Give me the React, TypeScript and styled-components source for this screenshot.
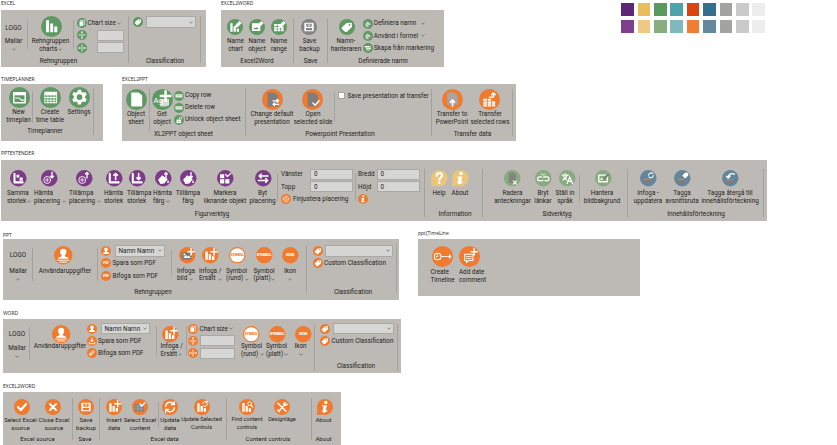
import React from "react";
import styled, { createGlobalStyle } from "styled-components";

const GlobalStyle = createGlobalStyle`
  html, body { margin: 0; background: #fff; overflow: hidden; }
  * { box-sizing: border-box; }
`;

const tone = {
  green: "#5e9862",
  orange: "#f07a2d",
  purple: "#7d3a86",
  yellow: "#ecc57b",
  sage: "#87ab7f",
  blue: "#62869c",
  gray: "#848484",
};
type Tone = keyof typeof tone;

/* ---------- layout parts ---------- */

const Page = styled.main`
  width: 837px;
  height: 445px;
  overflow: hidden;
  font: 6.35px/7.7px Roboto, "Liberation Sans", sans-serif;
  color: #1d1d1b;
`;

const Shelf = styled.div<{ $h: number; $left: number }>`
  display: flex;
  align-items: flex-start;
  height: ${(p) => p.$h}px;
  padding-left: ${(p) => p.$left}px;
`;

const Frame = styled.section<{ $w: number; $ml?: number }>`
  flex: none;
  width: ${(p) => p.$w}px;
  margin-left: ${(p) => p.$ml ?? 0}px;
`;

const Title = styled.h2<{ $drop?: number }>`
  margin: 0;
  height: 10px;
  padding-top: ${(p) => p.$drop ?? 0}px;
  font: 400 5px/7px "Open Sans", "Noto Sans", sans-serif;
  white-space: nowrap;
`;

const Ribbon = styled.div<{ $h: number; $top: number; $size: number; $label: number; $foot: number; $font?: number }>`
  display: flex;
  align-items: flex-start;
  height: ${(p) => p.$h}px;
  background: #bdbab5;
  font-size: ${(p) => p.$font ?? 6.35}px;
  --icon-top: ${(p) => p.$top}px;
  --icon-size: ${(p) => p.$size}px;
  --label-top: ${(p) => p.$label - 3.1}px;
  --foot-top: ${(p) => p.$foot - 3.1}px;
`;

const GroupBox = styled.div<{ $w: number }>`
  flex: none;
  width: ${(p) => p.$w}px;
  display: grid;
  grid-template-rows: var(--foot-top) auto;
`;

const Tools = styled.div`
  display: flex;
  align-items: flex-start;
  min-height: 0;
`;

const Footer = styled.div<{ $center: number }>`
  display: flex;
  justify-content: center;
  width: ${(p) => p.$center * 2}px;
  white-space: nowrap;
`;

const Rule = styled.i<{ $top: number; $h: number; $ml?: number }>`
  flex: none;
  width: 1px;
  height: ${(p) => p.$h}px;
  margin-top: ${(p) => p.$top}px;
  margin-left: ${(p) => p.$ml ?? 0}px;
  background: #a5a29e;
`;

const ToolBox = styled.div<{ $ml: number }>`
  flex: none;
  width: 20px;
  margin-left: ${(p) => p.$ml}px;
  display: grid;
  grid-template-rows: var(--label-top) auto;
`;

const IconSlot = styled.div<{ $grow: number }>`
  display: flex;
  justify-content: center;
  padding-top: calc(var(--icon-top) - ${(p) => p.$grow / 2}px);
  svg {
    flex: none;
    width: calc(var(--icon-size) + ${(p) => p.$grow}px);
    height: calc(var(--icon-size) + ${(p) => p.$grow}px);
  }
`;

const Caption = styled.div<{ $shift: number; $left: boolean; $small?: boolean }>`
  display: flex;
  flex-direction: column;
  align-items: ${(p) => (p.$left ? "flex-start" : "center")};
  width: 20px;
  margin-left: ${(p) => p.$shift}px;
  ${(p) => p.$small && "font-size: 5.6px;"}
`;

const Line = styled.span`
  display: flex;
  align-items: center;
  gap: 0.5px;
  min-height: 7.7px;
  white-space: pre;
`;

const Stack = styled.div<{ $ml: number; $w?: number; $top: number; $row?: number }>`
  flex: none;
  width: ${(p) => (p.$w ? `${p.$w}px` : "auto")};
  margin-left: ${(p) => p.$ml}px;
  padding-top: ${(p) => p.$top}px;
  display: grid;
  grid-auto-rows: ${(p) => p.$row ?? 12.3}px;
`;

const MiniRow = styled.div<{ $gap?: number }>`
  display: flex;
  align-items: center;
  gap: ${(p) => p.$gap ?? 1.5}px;
  white-space: nowrap;
  > svg:first-child { width: 10px; height: 10px; flex: none; }
`;

const Text = styled.span<{ $end?: number }>`
  padding-top: 1.4px;
  padding-right: ${(p) => p.$end ?? 0}px;
`;

const Box = styled.div<{ $w: number; $h?: number; $ml?: number }>`
  flex: none;
  display: flex;
  align-items: center;
  justify-content: space-between;
  width: ${(p) => p.$w}px;
  height: ${(p) => p.$h ?? 11}px;
  margin-left: ${(p) => p.$ml ?? 0}px;
  padding: 0 2px 0 3px;
  background: #d6d6d4;
  border: 1px solid #aaa8a5;
`;

const FieldName = styled(Text)<{ $w: number }>`
  flex: none;
  width: ${(p) => p.$w}px;
`;

const CheckBox = styled.i`
  width: 7px;
  height: 7px;
  background: #fff;
  border: 1px solid #a5a29e;
`;

const LogoBox = styled.div<{ $ml: number; $top: number; $gap: number }>`
  flex: none;
  width: 20px;
  margin-left: ${(p) => p.$ml}px;
  padding-top: ${(p) => p.$top + 0.8}px;
  display: flex;
  flex-direction: column;
  align-items: center;
  gap: ${(p) => p.$gap}px;
`;

const LogoMenu = styled.div`
  display: flex;
  flex-direction: column;
  align-items: center;
  gap: 2.3px;
`;

const Palette = styled.div`
  display: grid;
  grid-template-columns: repeat(9, 12.6px);
  grid-auto-rows: 13px;
  gap: 4px 3.8px;
  margin: 3px 0 0 177.6px;
`;

const Swatch = styled.i<{ $c: string }>`
  background: ${(p) => p.$c};
`;

/* ---------- glyphs, on a 24 unit disc ---------- */

const s = (d: string, w = 1.8, c = "#fff") => (
  <path d={d} stroke={c} strokeWidth={w} fill="none" strokeLinecap="round" strokeLinejoin="round" />
);
const f = (d: string, c = "#fff") => <path d={d} fill={c} fillRule="evenodd" />;
const word = (t: string, size: number, fill = "#fff", y = 13.7) => (
  <text x="12" y={y} fontSize={size} fontWeight="900" textAnchor="middle" fill={fill} fontFamily="Roboto, sans-serif">{t}</text>
);
const G = "#7d7d7d";
const plus = s("M17.5 2.5v9M13 7h9", 2.2);
const pencil = f("M12.5 9.5l6-6.5 3.5 3-6 6.5-4 .8z");
const bag = f("M4.5 14l6-6.5 8 6-5 6-5.5 1z");

const glyphs: Record<string, React.ReactNode> = {
  chart: f("M5.8 4.8h3.4v13.7H5.8zM10.5 8.5h3.4v10h-3.4zM15.2 12h3.4v6.5h-3.4z"),
  chartEdit: <>{f("M5 6.5h3.4v12.5H5zM9.8 11h3.4v8H9.8zM14.6 14.5h3.4v4.5h-3.4z")}{pencil}</>,
  chartPlus: <>{f("M5 6.5h3.4v12.5H5zM9.8 10.5h3.4v8.5H9.8zM14.6 13.5h3.4v5.5h-3.4z")}{plus}</>,
  chartSync: <>{f("M5 6h3.4v13H5zM9.8 10.5h3.4v8.5H9.8zM14.6 13.5h3.4v5.5h-3.4z")}{s("M13.3 7a3.6 3.6 0 0 1 6-2.4M20 7.5a3.6 3.6 0 0 1-6 2.6M19.8 3v2.5h-2.5", 1.4)}</>,
  chartFind: <>{f("M5 6h3.4v13H5zM9.8 10.5h3.4v8.5H9.8zM14.6 14h3.4v5h-3.4z")}<circle cx="16" cy="7" r="2.8" stroke="#fff" strokeWidth="1.4" fill="none" />{s("M18 9.3l2.8 3", 1.6)}</>,
  object: <>{f("M4.5 6.5h12.5v11.5H4.5zM6.5 15.5h8l-2.5-4-2 2.2-1.3-1.2z")}{pencil}</>,
  range: <>{f("M4.5 7.5h4.3v3H4.5zM9.8 7.5h4v3h-4zM4.5 11.5h4.3v3H4.5zM9.8 11.5h4v3h-4zM14.8 11.5h4.2v3h-4.2zM4.5 15.5h4.3v3H4.5zM9.8 15.5h4v3h-4zM14.8 15.5h4.2v3h-4.2z")}{pencil}</>,
  copyShape: <>{f("M6 8h9v11H6z")}{s("M8 5.5h10.5V17", 1.6)}</>,
  arrowsV: <>{s("M4.5 12h15", 1.9)}{s("M12 4v5M12 15v5M10.5 6L12 4l1.5 2M10.5 18l1.5 2 1.5-2", 1.6)}</>,
  arrowsH: <>{s("M12 4.5v15", 1.9)}{s("M4 12h5M15 12h5M6 10.5L4 12l2 1.5M18 10.5l2 1.5-2 1.5", 1.6)}</>,
  tag: f("M4.5 12.5l7-6.5 7.5-.5.5 6.5-7.5 7c-1 .8-2 .8-3 0l-4.3-3.8c-.9-1-.9-1.9-.2-2.7zM15.7 7.5a1.3 1.3 0 1 0 .1 2.6 1.3 1.3 0 0 0-.1-2.6z"),
  save: f("M6 5.5h12c.6 0 1 .4 1 1v11c0 .6-.4 1-1 1H6c-.6 0-1-.4-1-1v-11c0-.6.4-1 1-1zM8 7v4.5h8V7zM7.5 13.5V17h9v-3.5zM11 8h2v2.5h-2z"),
  tagEdit: <>{f("M5 12l6-6 8 6-6 7-5 .5z", "#c9d6c4")}{s("M12 15l6 3.5", 2.4, G)}</>,
  tagGrid: <>{f("M4 7h14v4H4zM7 12.5h11v2.5h-11z")}{s("M9 16l3 3 7-7", 1.8)}</>,
  window: <>{s("M5.5 6.5h13v11.5h-13z", 1.6)}{f("M5 6h14v3.5H5z")}{s("M7.5 12.5h4l2.5 2.5h3.5", 1.2)}</>,
  table: f("M5 5.5h14.5v13H5zM6 9.5v2h2.5v-2zM9.5 9.5v2H12v-2zM13 9.5v2h2.5v-2zM16.5 9.5v2h2v-2zM6 12.5v2h2.5v-2zM9.5 12.5v2H12v-2zM13 12.5v2h2.5v-2zM16.5 12.5v2h2v-2zM6 15.5v2h2.5v-2zM9.5 15.5v2H12v-2zM13 15.5v2h2.5v-2zM16.5 15.5v2h2v-2z"),
  gear: f("M10.2 3h3.6l.5 2.5 1.8 1 2.4-.9 1.8 3.1-1.9 1.6v2.4l1.9 1.6-1.8 3.1-2.4-.9-1.8 1-.5 2.5h-3.6l-.5-2.5-1.8-1-2.4.9-1.8-3.1 1.9-1.6v-2.4L3.7 8.7l1.8-3.1 2.4.9 1.8-1zM12 8.2a3.3 3.3 0 1 0 0 6.6 3.3 3.3 0 0 0 0-6.6z"),
  page: f("M6 4h8.5l4 3.5v12.5H6z"),
  getObject: <>{f("M9.5 11.5h10v7l-4 1.5h-6z", "#d8dcd5")}<text x="1.8" y="15.5" fontSize="9" fill="#fff" fontFamily="Roboto, sans-serif">Ag</text>{s("M15.5 2.5v11M10 8h11", 2.8)}</>,
  rowCopy: <>{f("M3.5 8h17v7.5h-17z")}{s("M6 11.8h3M11 11.8h2.5M15.5 11.8h2.5", 1.5, tone.green)}</>,
  lock: <>{f("M6 11h11v8.5H6z")}{s("M13 10V7a2.8 2.8 0 0 1 5.5 0v3", 1.8)}{s("M9.5 15.3h4", 1.4, tone.green)}</>,
  pageSwap: <>{f("M6.5 4h8l3.5 3.5V20H6.5z", G)}{s("M12.5 13.5h6.5M17 11.8l2 1.7-2 1.7M19 17.5h-6M14.5 16l-2 1.5 2 1.5", 1.4)}</>,
  pageCheck: <>{f("M6.5 4h8l3.5 3.5V20H6.5z", G)}{s("M12.5 16l2.5 2.5 4.5-5", 1.7)}</>,
  pageUp: <>{f("M6 4h8l4 3.5V18H6z", "#aba5a1")}{s("M12 20v-7M9.8 15l2.2-2.5 2.2 2.5", 1.8)}</>,
  tableUp: <>{f("M5 11h4v2.5H5zM10 11h4v2.5h-4zM5 14.3h4v2.5H5zM10 14.3h4v2.5h-4zM15 14.3h3.5v2.5H15zM5 17.5h4V20H5zM10 17.5h4V20h-4zM15 17.5h3.5V20H15z")}{s("M12 9.5h4.5V4.5M14.5 6.5l2-2.2 2 2.2", 1.7)}</>,
  size: <>{s("M6.5 5.5v12.5h12", 3)}{f("M9.5 7h4v4h-4zM14 11h4.5v4.5H14z")}</>,
  placeDown: <><circle cx="9" cy="14.5" r="5" stroke="#fff" fill="none" strokeWidth="1.3" />{s("M6.5 14.5h5M9 12v5", 1.1)}{s("M16 3v8M13.8 9L16 11.3 18.2 9", 1.9)}</>,
  placeUp: <><circle cx="9" cy="14.5" r="5" stroke="#fff" fill="none" strokeWidth="1.3" />{s("M6.5 14.5h5M9 12v5", 1.1)}{s("M16 11.5V3.5M13.8 5.7L16 3.5l2.2 2.2", 1.9)}</>,
  sizeUp: <>{s("M5.5 5.5v12.5h13", 3)}{s("M14 14V5M11.5 7.5L14 5l2.5 2.5", 2.3)}</>,
  sizeDown: <>{s("M5.5 5.5v12.5h13", 3)}{s("M14 5v9M11.5 11.5L14 14l2.5-2.5", 2.3)}</>,
  fillUp: <>{bag}{s("M16 12V4M14 6l2-2.2L18 6", 1.9)}{f("M19 14.5c1.8 2.5 1.8 4.5 0 4.5s-1.8-2 0-4.5z")}</>,
  fillDown: <>{bag}{s("M16 3.5v8M14 9.5l2 2.2 2-2.2", 1.9)}{f("M19 14.5c1.8 2.5 1.8 4.5 0 4.5s-1.8-2 0-4.5z")}</>,
  mark: <>{f("M4.5 6h6v6h-6zM4.5 13.5h6v6h-6zM12 13.5h6v6h-6z")}{s("M12.5 6.5l2.5 3 5.5-5", 1.8)}</>,
  swap: s("M19 8.8H6M9 6L6 8.8 9 11.5M5 15.3h13M15.5 12.5l3 2.8-3 2.7", 2.1),
  target: <><circle cx="12" cy="12" r="6.5" stroke="#fff" strokeWidth="1.3" fill="none" /><circle cx="12" cy="12" r="3" stroke="#fff" strokeWidth="1.2" fill="none" />{s("M12 3.5v3M12 17.5v3M3.5 12h3M17.5 12h3", 1)}</>,
  info: <><circle cx="13.2" cy="5.2" r="2.5" fill="#fff" />{f("M8 9.3h7l-2 8.2c.8 0 1.5-.4 2.3-1.1l.7 1c-1.6 2-3.4 3.100-5.400 3.100-2 0-2.800-1-2.400-2.700l1.500-6.500H7.700z")}</>,
  help: <>{s("M8.2 8.5c.2-5.3 8.3-5 7.8-.5-.3 2.800-3.800 3-3.900 6.500", 3)}<circle cx="11.8" cy="18.7" r="1.9" fill="#fff" /></>,
  pageX: <>{f("M7 3.5h7l3.5 3.5v12H7z", "#85857f")}{s("M13.5 16l4.5 4.5M18 16l-4.5 4.5", 1.7)}</>,
  unlink: <>{s("M9.5 10H6.5a2.8 2.8 0 0 0 0 5.6h3.5a2.8 2.8 0 0 0 1.5-.6M14.5 15.6h3a2.8 2.8 0 0 0 0-5.6H14a2.8 2.8 0 0 0-1.5.6", 1.8)}{s("M12 5.5v2M9 5.5l.8 1.8M15 5.5l-.8 1.8", 1)}</>,
  language: <>{s("M4.5 7.5h9M9 5.3v2M11.5 7.5c-.5 3-3 5.5-6 7M6.8 9.5c1 2.5 3 4 4.7 5", 1.6)}{s("M11.8 19.5l3.9-9.5 3.9 9.5M13.2 16.5h5", 1.8)}</>,
  image: <>{s("M5.5 7.5h12.5v9.5h-12.5z", 2)}{s("M12 13.5l7-6.5", 3, G)}{f("M7 14l3-3 2.5 3z")}</>,
  boxSync: <>{f("M4 12h12v7.5H4z", G)}{s("M6 13.5h8", 1.2, "#a0a0a0")}{s("M12.5 7.5a3.7 3.7 0 0 1 6.5-2M19.5 8a3.7 3.7 0 0 1-6.5 2", 1.5)}</>,
  boxTag: <>{f("M4 12h12v7.5H4z", G)}{s("M6 13.5h8", 1.2, "#a0a0a0")}{f("M12 8l4.500-4.500 4 .8.3 3.700-4.800 4.500z")}</>,
  boxBack: <>{f("M5 13h12v7H5z", G)}{s("M7 14.5h8", 1.2, "#a0a0a0")}{s("M18 6c-5-2-8.5.5-9 5M6.5 9L9 11.5 11.5 9", 2)}</>,
  user: <>{f("M12 3.5c3 0 4.3 2 4 4.6-.3 2.5-1.3 3.4-2 4.2 0 1.5 1 1.5 3.5 2.3.8.3 1 1 1 2H5.5c0-1 .2-1.7 1-2 2.5-.8 3.5-.8 3.5-2.3-.7-.8-1.7-1.7-2-4.2-.3-2.6 1-4.6 4-4.6z")}{s("M4.5 18.5h15M7.5 21h9", 1.2)}</>,
  person: f("M12 3.5c3 0 4.3 2 4 4.8-.3 2.5-1.2 3.6-2 4.4 0 1.8 1 2 4 3 1 .4 1.5 1.5 1.5 3.3h-15c0-1.8.5-2.9 1.5-3.3 3-1 4-1.2 4-3-.8-.8-1.7-1.9-2-4.4-.3-2.8 1-4.8 4-4.8z"),
  pdf: word("PDF", 7.5, "#fff", 14.6),
  download: <>{s("M12 4.5V13M8.5 10l3.5 3.5 3.5-3.5", 2.2)}{s("M5.5 15v3.5h13V15", 2.2)}</>,
  clip: s("M6 14l7-6.5c2.5-2 5.5.5 3.7 3L11 16.5c-1.5 1-3-.5-2-1.8l5-4.5M6 14c-1.5 2.5 1 5 3.5 3.5", 1.8),
  photoPlus: <>{f("M4 8h14v10H4z", "#777")}{f("M6 16l4-4.5 2.5 2.5 2-1.5 2.5 3.5zM6.5 9.5H9V12H6.5z")}{plus}</>,
  symbolRing: <><circle cx="12" cy="12" r="10.3" fill="#fff" />{word("SYMBOL", 5, tone.orange)}</>,
  symbol: word("SYMBOL", 5.4),
  ikon: word("IKON", 5.2),
  timeline: <><circle cx="6.5" cy="12" r="3.8" stroke="#fff" strokeWidth="1.2" fill="none" />{s("M6.5 10v2h-1.5", 1)}{s("M11.5 12h2M15 12h1.5M18 12h3.5M19.8 10.2l1.7 1.8-1.7 1.8", 1.3)}</>,
  comment: <>{s("M6.5 9.5h9.5v7H11l-2.5 2.5v-2.5h-2z", 1.2)}{s("M8.5 12h5.5M8.5 14.2h5.5", 0.9)}{s("M17.3 3.2v7M13.8 6.7h7", 1.7)}</>,
  check: s("M6 12l4.2 4.5 8-9", 3.2),
  cross: s("M7.3 7.3l9.4 9.4M16.7 7.3l-9.4 9.4", 3),
  gridCheck: <>{f("M4 7h14v12H4z", G)}{s("M4 11h14M4 15h14M8.5 7v12M13.5 7v12", 0.9, "#b9b4af")}{s("M12 7.5l2.5 3 5-5", 2)}</>,
  sync: s("M5.5 11a6.5 6.5 0 0 1 12-3M18.5 13a6.5 6.5 0 0 1-12 3M18.5 4v4.5H14M5.5 20v-4.5H10", 2.1),
  tools: <>{s("M7.5 18l9-10M17 5.5c-3 .5-3.5 3-1.5 4 2 .5 3.5-.5 4-2", 2)}{s("M6 6.5l12 12", 2.2)}{s("M5.5 16.5l2.5 2.5", 2)}</>,
};

const Icon = ({ name, color, tail }: { name: string; color: Tone; tail?: boolean }) => (
  <svg viewBox="0 0 24 24" overflow="visible" aria-hidden>
    {tail && <path d="M1 13L0 24l10-1z" fill={tone[color]} />}
    <circle cx="12" cy="12" r="12" fill={tone[color]} />
    {glyphs[name]}
  </svg>
);

const Chevron = () => (
  <svg width="4" height="3" viewBox="0 0 4 3" aria-hidden>
    <path d="M.5.8L2 2.2 3.500.8" fill="none" stroke="#4a4846" strokeWidth=".6" />
  </svg>
);

/* ---------- composed parts ---------- */

type ToolProps = {
  icon: string; color: Tone; ml: number; text: string[];
  shift?: number; left?: boolean; small?: boolean; tail?: boolean; grow?: number;
};

/* A trailing "▾" in a text line is drawn as the drop-down chevron. */
const Tool = ({ icon, color, ml, text, shift = 0, left = false, small, tail, grow = 0 }: ToolProps) => (
  <ToolBox $ml={ml}>
    <IconSlot $grow={grow}><Icon name={icon} color={color} tail={tail} /></IconSlot>
    <Caption $shift={shift} $left={left} $small={small}>
      {text.map((t) => (
        <Line key={t}>{t.replace("▾", "")}{t.endsWith("▾") && <Chevron />}</Line>
      ))}
    </Caption>
  </ToolBox>
);

const Group = ({ w, foot, center = 0, children }: { w: number; foot?: string; center?: number; children: React.ReactNode }) => (
  <GroupBox $w={w}>
    <Tools>{children}</Tools>
    {foot && <Footer $center={center}>{foot}</Footer>}
  </GroupBox>
);

type MiniProps = { icon: string; color: Tone; text?: string; more?: boolean; end?: number; gap?: number };

const Mini = ({ icon, color, text, more, end, gap }: MiniProps) => (
  <MiniRow $gap={gap}>
    <Icon name={icon} color={color} />
    {text && <Text $end={end}>{text}</Text>}
    {more && <Chevron />}
  </MiniRow>
);

const Field = ({ name, w }: { name: string; w: number }) => (
  <MiniRow $gap={0}>
    <FieldName $w={w}>{name}</FieldName>
    <Box $w={43}><Text>0</Text></Box>
  </MiniRow>
);

const Logo = ({ ml, top, gap }: { ml: number; top: number; gap: number }) => (
  <LogoBox $ml={ml} $top={top} $gap={gap}>
    <span>LOGO</span>
    <LogoMenu><span>Mallar</span><Chevron /></LogoMenu>
  </LogoBox>
);

const swatches = [
  "#5f2678", "#e9bd5b", "#5a9a5e", "#4ea3aa", "#d9440f", "#33708e", "#a3a3a2", "#cacaca", "#ededed",
  "#7e3f8c", "#edc984", "#88ad80", "#80b8be", "#f07d33", "#64889e", "#a3a3a2", "#cacaca", "#ededed",
];

export default function App() {
  return (
    <Page>
      <GlobalStyle />

      <Shelf $h={74} $left={1}>
        <Frame $w={205.4}>
          <Title>EXCEL</Title>
          <Ribbon $h={57} $top={6} $size={21} $label={31} $foot={51.5}>
            <Group w={127} foot="Rehngruppen" center={57.5}>
              <Logo ml={2.5} top={14.6} gap={4.8} />
              <Rule $top={10} $h={29} $ml={3.5} />
              <Tool icon="chart" color="green" ml={12.5} text={["Rehngruppen", "charts▾"]} />
              <Rule $top={10} $h={29} $ml={12.5} />
              <Stack $ml={2.5} $top={7}>
                <Mini icon="copyShape" color="green" text="Chart size" more gap={1} />
                <MiniRow><Icon name="arrowsV" color="green" /><Box $w={27} $ml={9} /></MiniRow>
                <MiniRow><Icon name="arrowsH" color="green" /><Box $w={27} $ml={9} /></MiniRow>
              </Stack>
            </Group>
            <Rule $top={6} $h={47} />
            <Group w={71} foot="Classification" center={36}>
              <Stack $ml={4} $top={6}>
                <MiniRow $gap={2.5}><Icon name="tag" color="green" /><Box $w={50.5} $h={12}><span /><Chevron /></Box></MiniRow>
              </Stack>
            </Group>
            <Rule $top={6} $h={47} />
          </Ribbon>
        </Frame>

        <Frame $w={222.6} $ml={14.6}>
          <Title>EXCEL2WORD</Title>
          <Ribbon $h={57} $top={9} $size={16} $label={31} $foot={51.5}>
            <Group w={72} foot="Excel2Word" center={36}>
              <Tool icon="chartEdit" color="green" ml={4.5} text={["Name", "chart"]} />
              <Tool icon="object" color="green" ml={1.5} text={["Name", "object"]} />
              <Tool icon="range" color="green" ml={2} text={["Name", "range"]} />
            </Group>
            <Rule $top={8} $h={45} />
            <Group w={33} foot="Save" center={16.5}>
              <Tool icon="save" color="gray" ml={5.5} text={["Save", "backup"]} />
            </Group>
            <Rule $top={8} $h={45} />
            <Group w={115} foot="Definierade namn" center={55}>
              <Tool icon="tag" color="green" ml={9} text={["Namn-", "hanteraren"]} shift={-1} />
              <Stack $ml={6} $top={7.4}>
                <Mini icon="tagEdit" color="green" text="Definiera namn" more end={3.6} gap={0.8} />
                <Mini icon="tagEdit" color="green" text="Använd i formel" more end={2.4} gap={0.8} />
                <Mini icon="tagGrid" color="green" text="Skapa från markering" gap={0.8} />
              </Stack>
            </Group>
          </Ribbon>
        </Frame>

        <Palette>{swatches.map((c, i) => <Swatch key={i} $c={c} />)}</Palette>
      </Shelf>

      <Shelf $h={76} $left={1}>
        <Frame $w={102}>
          <Title $drop={1.5}>TIMEPLANNER</Title>
          <Ribbon $h={57} $top={3} $size={21} $label={28.5} $foot={47.5}>
            <Group w={92} foot="Timeplanner" center={44}>
              <Tool icon="window" color="green" ml={7.5} text={["New", "timeplan"]} />
              <Rule $top={7} $h={32} $ml={3.5} />
              <Tool icon="table" color="green" ml={7} text={["Create", "time table"]} />
              <Tool icon="gear" color="green" ml={9} text={["Settings"]} />
            </Group>
            <Rule $top={4} $h={47} />
          </Ribbon>
        </Frame>

        <Frame $w={394} $ml={19}>
          <Title $drop={1.5}>EXCEL2PPT</Title>
          <Ribbon $h={57} $top={4.5} $size={21} $label={30} $foot={50}>
            <Group w={123} foot="XL2PPT object sheet" center={61.5}>
              <Tool icon="page" color="green" ml={4} text={["Object", "sheet"]} />
              <Rule $top={5} $h={43} $ml={3} />
              <Tool icon="getObject" color="green" ml={2} text={["Get", "object"]} />
              <Stack $ml={1.5} $top={5.6} $row={12}>
                <Mini icon="rowCopy" color="green" text="Copy row" />
                <Mini icon="rowCopy" color="green" text="Delete row" />
                <Mini icon="lock" color="green" text="Unlock object sheet" />
              </Stack>
            </Group>
            <Rule $top={4} $h={48} />
            <Group w={185} foot="Powerpoint Presentation" center={94}>
              <Tool icon="pageSwap" color="orange" ml={16} text={["Change default", "presentation"]} />
              <Tool icon="pageCheck" color="orange" ml={19.5} text={["Open", "selected slide"]} shift={1.5} />
              <Rule $top={9} $h={29} $ml={12.5} />
              <Stack $ml={3} $top={5.6}>
                <MiniRow $gap={2.5}><CheckBox /><Text>Save presentation at transfer</Text></MiniRow>
              </Stack>
            </Group>
            <Rule $top={5} $h={47} />
            <Group w={80} foot="Transfer data" center={40.5}>
              <Tool icon="pageUp" color="orange" ml={10} text={["Transfer to", "PowerPoint"]} />
              <Tool icon="tableUp" color="orange" ml={17} text={["Transfer", "selected rows"]} shift={1} />
            </Group>
            <Rule $top={5} $h={47} />
          </Ribbon>
        </Frame>
      </Shelf>

      <Shelf $h={79} $left={1}>
        <Frame $w={766}>
          <Title>PPTEXTENDER</Title>
          <Ribbon $h={61} $top={10} $size={16.5} $label={33.2} $foot={54.2}>
            <Group w={423} foot="Figurverktyg" center={211}>
              <Tool icon="size" color="purple" ml={7} text={["Samma", "storlek▾"]} left shift={-1} />
              <Tool icon="placeDown" color="purple" ml={11.5} text={["Hämta", "placering ▾"]} left shift={-5.5} />
              <Tool icon="placeUp" color="purple" ml={15} text={["Tillämpa", "placering ▾"]} left shift={-5.5} />
              <Tool icon="sizeUp" color="purple" ml={9.5} text={["Hämta", "storlek"]} left />
              <Tool icon="sizeDown" color="purple" ml={3} text={["Tillämpa", "storlek"]} left />
              <Tool icon="fillUp" color="purple" ml={6} text={["Hämta", "färg ▾"]} left />
              <Tool icon="fillDown" color="purple" ml={5} text={["Tillämpa", "färg"]} />
              <Tool icon="mark" color="purple" ml={17} text={["Markera", "liknande objekt"]} />
              <Tool icon="swap" color="purple" ml={18.5} text={["Byt", "placering"]} shift={-1} />
              <Rule $top={13} $h={28} $ml={3.5} />
              <Stack $ml={3} $w={73} $top={8.4}>
                <Field name="Vänster" w={29} />
                <Field name="Topp" w={29} />
                <Mini icon="target" color="orange" text="Finjustera placering" gap={2} />
              </Stack>
              <Rule $top={13} $h={28} $ml={1} />
              <Stack $ml={2} $w={62} $top={8.4}>
                <Field name="Bredd" w={18.5} />
                <Field name="Höjd" w={18.5} />
                <Mini icon="info" color="orange" />
              </Stack>
            </Group>
            <Rule $top={9} $h={48} />
            <Group w={57} foot="Information" center={30}>
              <Tool icon="help" color="yellow" ml={4} text={["Help"]} tail />
              <Tool icon="info" color="yellow" ml={1} text={["About"]} tail />
            </Group>
            <Rule $top={9} $h={48} />
            <Group w={144} foot="Sidverktyg" center={74}>
              <Tool icon="pageX" color="sage" ml={19.5} text={["Radera", "anteckningar"]} />
              <Tool icon="unlink" color="sage" ml={10.5} text={["Bryt", "länkar"]} />
              <Tool icon="language" color="sage" ml={4} text={["Ställ in", "språk"]} shift={-2} />
              <Rule $top={15} $h={27} $ml={2} />
              <Tool icon="image" color="sage" ml={13.5} text={["Hantera", "bildbakgrund"]} shift={-1.5} />
            </Group>
            <Rule $top={9} $h={48} />
            <Group w={135} foot="Innehållsförteckning" center={68}>
              <Tool icon="boxSync" color="blue" ml={10} text={["Infoga -", "uppdatera"]} />
              <Tool icon="boxTag" color="blue" ml={14} text={["Tagga", "avsnittsruta"]} />
              <Tool icon="boxBack" color="blue" ml={28} text={["Tagga återgå till", "innehållsförteckning"]} />
            </Group>
            <Rule $top={9} $h={48} />
          </Ribbon>
        </Frame>
      </Shelf>

      <Shelf $h={80} $left={3}>
        <Frame $w={396.4}>
          <Title $drop={2.5}>PPT</Title>
          <Ribbon $h={61} $top={7.5} $size={16.5} $label={31.7} $foot={52.8}>
            <Group w={303} foot="Rehngruppen" center={150}>
              <Logo ml={5} top={12.2} gap={8} />
              <Rule $top={9} $h={33} $ml={4} />
              <Tool icon="user" color="orange" ml={18.5} text={["Användaruppgifter"]} shift={3.5} grow={2} />
              <Rule $top={9} $h={33} $ml={25.5} />
              <Stack $ml={2.5} $w={70} $top={5.4} $row={12.7}>
                <MiniRow $gap={4}><Icon name="person" color="orange" /><Box $w={50} $h={12}><Text>Namn Namn</Text><Chevron /></Box></MiniRow>
                <Mini icon="pdf" color="orange" text="Spara som PDF" gap={2} />
                <Mini icon="pdf" color="orange" text="Bifoga som PDF" gap={2} />
              </Stack>
              <Rule $top={11} $h={26} $ml={0.5} />
              <Tool icon="photoPlus" color="orange" ml={4.5} text={["Infoga", "bild ▾"]} left shift={0.5} />
              <Tool icon="chartPlus" color="orange" ml={4} text={["Infoga /", "Ersätt ▾"]} left shift={-1.5} />
              <Tool icon="symbolRing" color="orange" ml={7} text={["Symbol", "(rund) ▾"]} left shift={-1.5} />
              <Tool icon="symbol" color="orange" ml={6.5} text={["Symbol", "(platt)▾"]} left shift={-0.5} />
              <Tool icon="ikon" color="orange" ml={6} text={["Ikon", "▾"]} />
            </Group>
            <Rule $top={6} $h={48} />
            <Group w={89} foot="Classification" center={46}>
              <Stack $ml={5.5} $top={5.4} $row={12.7}>
                <MiniRow $gap={2}><Icon name="tag" color="orange" /><Box $w={68} $h={12}><span /><Chevron /></Box></MiniRow>
                <Mini icon="tag" color="orange" text="Custom Classification" />
              </Stack>
            </Group>
            <Rule $top={5} $h={49} />
          </Ribbon>
        </Frame>

        <Frame $w={222} $ml={18.6}>
          <Title $drop={0.5}>ppt[TimeLine</Title>
          <Ribbon $h={57} $top={7} $size={21} $label={33.5} $foot={50}>
            <Group w={222}>
              <Tool icon="timeline" color="orange" ml={14} text={["Create", "Timeline"]} left shift={-1.5} />
              <Tool icon="comment" color="orange" ml={7.5} text={["Add date", "comment"]} left shift={-0.5} />
            </Group>
          </Ribbon>
        </Frame>
      </Shelf>

      <Shelf $h={73} $left={3}>
        <Frame $w={398.4}>
          <Title $drop={1}>WORD</Title>
          <Ribbon $h={54} $top={7} $size={16.5} $label={27.5} $foot={47}>
            <Group w={311}>
              <Logo ml={4} top={11.2} gap={6.3} />
              <Rule $top={8} $h={33} $ml={2} />
              <Tool icon="user" color="orange" ml={21} text={["Användaruppgifter"]} shift={-1} grow={1.8} />
              <Stack $ml={15.5} $w={66} $top={3.7} $row={12.2}>
                <MiniRow $gap={4}><Icon name="person" color="orange" /><Box $w={49} $h={11}><Text>Namn Namn</Text><Chevron /></Box></MiniRow>
                <Mini icon="download" color="orange" text="Spara som PDF" />
                <Mini icon="clip" color="orange" text="Bifoga som PDF" />
              </Stack>
              <Rule $top={7} $h={30} $ml={3.5} />
              <Tool icon="chartPlus" color="orange" ml={2.5} text={["Infoga /", "Ersätt▾"]} left shift={1} />
              <Rule $top={7} $h={30} $ml={6.5} />
              <Stack $ml={1} $w={48} $top={3.7} $row={12.2}>
                <Mini icon="copyShape" color="orange" text="Chart size" more />
                <MiniRow $gap={2}><Icon name="arrowsV" color="orange" /><Box $w={35} /></MiniRow>
                <MiniRow $gap={2}><Icon name="arrowsH" color="orange" /><Box $w={35} /></MiniRow>
              </Stack>
              <Tool icon="symbolRing" color="orange" ml={4.5} text={["Symbol", "(rund) ▾"]} left shift={0.5} />
              <Tool icon="symbol" color="orange" ml={6.5} text={["Symbol", "(platt)▾"]} left shift={-1} />
              <Tool icon="ikon" color="orange" ml={6} text={["Ikon", "▾"]} shift={-2.5} />
            </Group>
            <Rule $top={5} $h={47} />
            <Group w={82} foot="Classification" center={41}>
              <Stack $ml={5} $top={3.7} $row={12.4}>
                <MiniRow $gap={2.5}><Icon name="tag" color="orange" /><Box $w={61} $h={11}><span /><Chevron /></Box></MiniRow>
                <Mini icon="tag" color="orange" text="Custom Classification" />
              </Stack>
            </Group>
            <Rule $top={5} $h={47} />
          </Ribbon>
        </Frame>
      </Shelf>

      <Shelf $h={63} $left={3}>
        <Frame $w={338}>
          <Title $drop={1}>EXCEL2WORD</Title>
          <Ribbon $h={53} $top={6.5} $size={16} $label={27.4} $foot={45.9} $font={6.1}>
            <Group w={69} foot="Excel source" center={34.5}>
              <Tool icon="check" color="orange" ml={8.5} text={["Select Excel", "source"]} shift={-1} />
              <Tool icon="cross" color="orange" ml={10.5} text={["Close Excel", "source"]} shift={2} />
            </Group>
            <Rule $top={6} $h={42} />
            <Group w={26} foot="Save" center={12}>
              <Tool icon="save" color="orange" ml={3} text={["Save", "backup"]} />
            </Group>
            <Rule $top={6} $h={42} />
            <Group w={126} foot="Excel data" center={64.5}>
              <Tool icon="chartPlus" color="orange" ml={4} text={["Insert", "data"]} />
              <Tool icon="gridCheck" color="orange" ml={6} text={["Select Excel", "content"]} />
              <Rule $top={10} $h={25} $ml={8} />
              <Tool icon="sync" color="orange" ml={0} text={["Update", "data"]} shift={1} />
              <Tool icon="chartSync" color="orange" ml={12.5} text={["Update Selected", "Controls"]} small />
            </Group>
            <Rule $top={6} $h={42} />
            <Group w={84} foot="Content controls" center={41}>
              <Tool icon="chartFind" color="orange" ml={10} text={["Find content", "controls"]} small />
              <Tool icon="tools" color="orange" ml={15} text={["Designläge"]} small />
            </Group>
            <Rule $top={6} $h={42} />
            <Group w={29} foot="About" center={11.5}>
              <Tool icon="info" color="orange" ml={2.5} text={["About"]} shift={-1} tail />
            </Group>
          </Ribbon>
        </Frame>
      </Shelf>
    </Page>
  );
}
